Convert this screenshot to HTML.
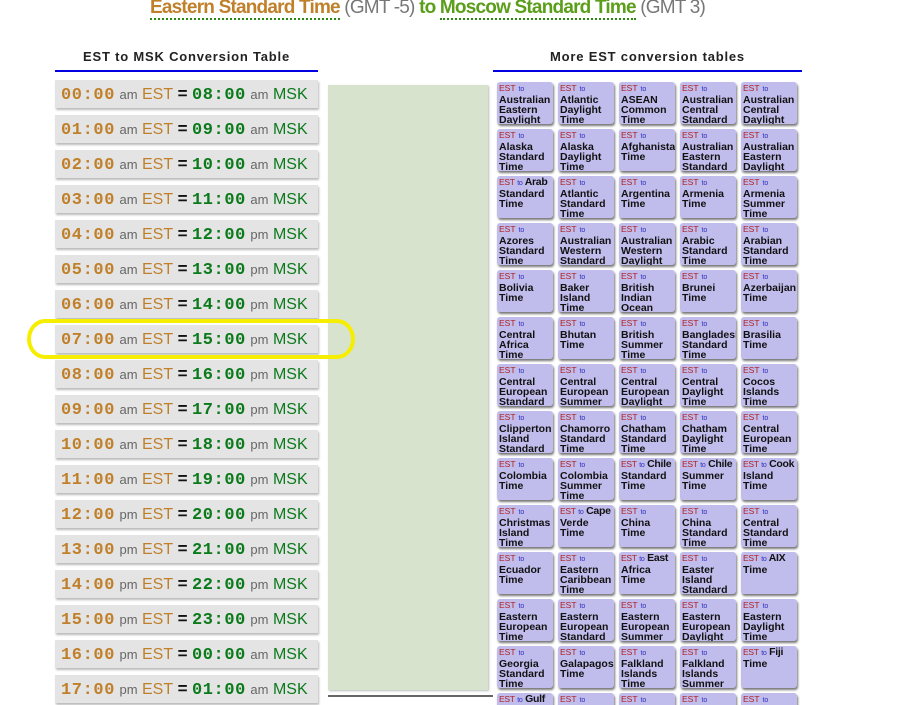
<!DOCTYPE html>
<html><head><meta charset="utf-8"><style>
*{margin:0;padding:0;box-sizing:border-box}
html,body{width:901px;height:705px;overflow:hidden}
body{background:#fff;font-family:"Liberation Sans",Arial,sans-serif;position:relative}
.title{position:absolute;left:150px;top:-3px;font-size:19px;letter-spacing:-0.8px;white-space:nowrap;color:#777}
.title b{font-weight:bold}
.o{color:#c0802a;border-bottom:2px dotted #2a8a10}
.g{color:#5a9e1a}
.gu{color:#5a9e1a;border-bottom:2px dotted #2a8a10}
h3{position:absolute;font-size:13px;font-weight:bold;color:#222;text-align:center;letter-spacing:0.8px}
.bl{position:absolute;height:2px;background:#0000e0}
.row{position:absolute;left:55px;width:263px;height:28px;background:#e4e4e4;box-shadow:1px 2px 2px #bbb;white-space:nowrap;padding-left:6px;line-height:28px}
.t1{font-family:"Liberation Mono",monospace;font-weight:bold;font-size:17px;color:#c0802a;letter-spacing:0.6px}
.t2{font-family:"Liberation Mono",monospace;font-weight:bold;font-size:17px;color:#0a7a1a;letter-spacing:0.6px}
.ap{font-size:13px;color:#666}
.e{font-size:16px;color:#c0802a}
.m{font-size:16px;color:#0a7a1a}
.eq{font-size:17px;font-weight:bold;color:#111}
.panel{position:absolute;left:328px;top:85px;width:160px;height:605px;background:#d7e3cd;box-shadow:1px 1px 2px #bbb}
.tile{position:absolute;width:56px;height:42px;background:#c0bcec;border-radius:3px;box-shadow:1px 2px 2px #777;overflow:hidden;padding:1px 2px;font-size:10.5px;font-weight:bold;line-height:10px;color:#111}
.tile i{font-style:normal;font-weight:normal;font-size:8.5px;color:#b02020}
.tile u{text-decoration:none;font-weight:normal;font-size:7px;color:#3030c0}
.nw{white-space:nowrap;letter-spacing:-0.3px}
</style></head><body>
<div class="title"><b class="o">Eastern Standard Time</b> (GMT -5) <b class="g">to</b> <b class="gu">Moscow Standard Time</b> (GMT 3)</div>
<h3 style="left:55px;width:263px;top:49px">EST to MSK Conversion Table</h3>
<div class="bl" style="left:55px;width:263px;top:70px"></div>
<h3 style="left:493px;width:309px;top:49px">More EST conversion tables</h3>
<div class="bl" style="left:493px;width:309px;top:70px"></div>
<div class="panel"></div>
<div style="position:absolute;left:328px;top:695px;width:165px;height:2px;background:#666"></div>
<div id="rows"></div>
<div style="position:absolute;left:27px;top:319px;width:328px;height:40px;border:4px solid #f5ee00;border-radius:18px/20px"></div>
<div id="tiles"></div>
<script>
var r='';
for(var h=0;h<18;h++){var m=(h+8)%24;
var a=h<12?'am':'pm',b=m<12?'am':'pm';
r+='<div class="row" style="top:'+(80+h*35)+'px"><span class="t1">'+(h<10?'0':'')+h+':00</span> <span class="ap">'+a+'</span> <span class="e">EST</span> <span class="eq">=</span> <span class="t2">'+(m<10?'0':'')+m+':00</span> <span class="ap">'+b+'</span> <span class="m">MSK</span></div>';}
document.getElementById('rows').innerHTML=r;
var n=["Australian Eastern Daylight Time","Atlantic Daylight Time","ASEAN Common Time","Australian Central Standard Time","Australian Central Daylight Time",
"Alaska Standard Time","Alaska Daylight Time","Afghanistan Time","Australian Eastern Standard Time","Australian Eastern Daylight Time",
"*Arab Standard Time","Atlantic Standard Time","Argentina Time","Armenia Time","Armenia Summer Time",
"Azores Standard Time","Australian Western Standard Time","Australian Western Daylight Time","Arabic Standard Time","Arabian Standard Time",
"Bolivia Time","Baker Island Time","British Indian Ocean Time","Brunei Time","Azerbaijan Time",
"Central Africa Time","Bhutan Time","British Summer Time","Bangladesh Standard Time","Brasilia Time",
"Central European Standard Time","Central European Summer Time","Central European Daylight Time","Central Daylight Time","Cocos Islands Time",
"Clipperton Island Standard Time","Chamorro Standard Time","Chatham Standard Time","Chatham Daylight Time","Central European Time",
"Colombia Time","Colombia Summer Time","*Chile Standard Time","*Chile Summer Time","*Cook Island Time",
"Christmas Island Time","*Cape Verde Time","China Time","China Standard Time","Central Standard Time",
"Ecuador Time","Eastern Caribbean Time","*East Africa Time","Easter Island Standard Time","*AIX Time",
"Eastern European Time","Eastern European Standard Time","Eastern European Summer Time","Eastern European Daylight Time","Eastern Daylight Time",
"Georgia Standard Time","Galapagos Time","Falkland Islands Time","Falkland Islands Summer Time","*Fiji Time",
"*Gulf Standard Time","Gambier Islands Time","Greenwich Mean Time","Gilbert Island Time","Greenland Time"];
var t='';
for(var i=0;i<n.length;i++){var c=i%5,rr=Math.floor(i/5),s=n[i],html;
if(s[0]=='*'){s=s.slice(1);var k=s.indexOf(' ');html='<span class="nw"><i>EST</i> <u>to</u> '+s.slice(0,k)+'</span>'+s.slice(k);}
else html='<i>EST</i> <u>to</u> '+s;
t+='<div class="tile" style="left:'+(497+c*61)+'px;top:'+(82+rr*47)+'px">'+html+'</div>';}
document.getElementById('tiles').innerHTML=t;
</script>
</body></html>
